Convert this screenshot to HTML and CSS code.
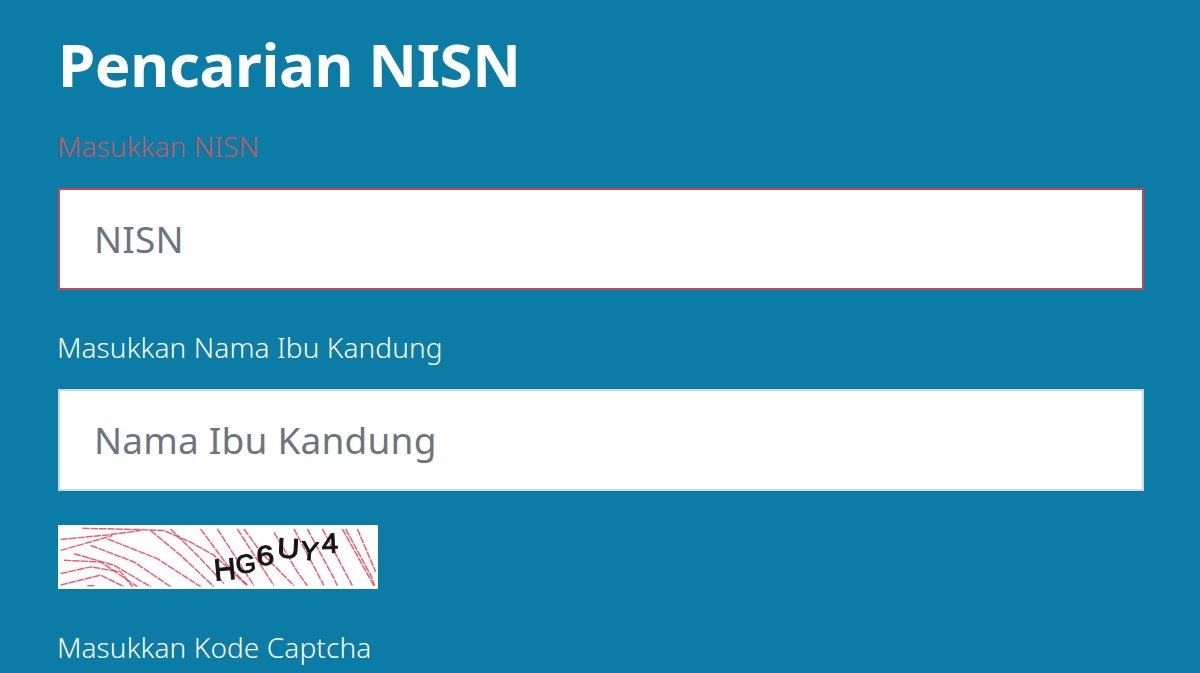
FILE: index.html
```html
<!DOCTYPE html>
<html lang="en">
<head>
    <meta charset="UTF-8">
    <meta name="viewport" content="width=device-width, initial-scale=1.0">
    <title>Pencarian NISN</title>
    <link rel="stylesheet" href="styles.css">
</head>
<body>

<div class="container">
    <h1>Pencarian NISN</h1>
    <div class="input-group has-error">
        <label for="nisn">Masukkan NISN</label>
        <input type="text" id="nisn" placeholder="NISN" />
    </div>
    <div class="input-group">
        <label for="ibu">Masukkan Nama Ibu Kandung</label>
        <input type="text" id="ibu" placeholder="Nama Ibu Kandung" />
    </div>
    <svg class="captcha" viewBox="52 28 960 194" preserveAspectRatio="none" aria-label="captcha">
        <rect x="52" y="28" width="960" height="194" fill="#fff" />
        <g class="captcha-lines">
            <path d="M125 38 L300 42 L370 45 L450 80 L520 120 L620 212" />
            <path d="M60 72 L200 58 L300 45" />
            <path d="M60 105 L130 85 L215 60" />
            <path d="M200 70 L350 130 L480 215" />
            <path d="M150 90 L280 140 L390 215" />
            <path d="M100 115 L220 150 L330 215" />
            <path d="M70 135 L180 140 L290 215" />
            <path d="M60 175 L150 155 L240 170 L275 215" />
            <path d="M60 210 L180 180 L250 215" />
            <path d="M140 212 L160 212" />
            <path d="M330 45 L420 120 L520 215" />
            <path d="M390 40 L470 120 L550 205" />
            <path d="M480 40 L560 150 L620 210" />
            <path d="M530 40 L640 212" />
            <path d="M590 40 L700 212" />
            <path d="M610 40 L660 110 L760 212" />
            <path d="M700 50 L770 170 L800 212" />
            <path d="M760 40 L850 212" />
            <path d="M800 40 L880 190 L890 212" />
            <path d="M845 40 L935 212" />
            <path d="M905 40 L1000 212" />
            <path d="M915 40 L990 180 L1002 212" />
            <path d="M950 40 L1005 170" />
        </g>
        <g class="captcha-text">
            <text transform="translate(522 197) rotate(-5)" font-size="92">H</text>
            <text transform="translate(588 176) rotate(-7)" font-size="78">G</text>
            <text transform="translate(650 152) rotate(-6) scale(1.15 1)" font-size="84">6</text>
            <text transform="translate(708 126) rotate(3) scale(1.1 1)" font-size="84">U</text>
            <text transform="translate(778 132) rotate(5)" font-size="80">Y</text>
            <text transform="translate(845 114) rotate(-3) scale(1.05 1)" font-size="84">4</text>
        </g>
    </svg>
    <div class="input-group">
        <label for="kode">Masukkan Kode Captcha</label>
    </div>
</div>

</body>
</html>
```

FILE: styles.css
```css
html, body {
    height: 100%;
    margin: 0;
    overflow: hidden;
}
body {
    font-family: "Noto Sans", Arial, sans-serif;
    background-color: #0a7ca6;
    color: #fff;
}
.container {
    padding: 22px 56px 0 58px;
}
h1 {
    margin: 0 0 20px;
    font-size: 60px;
    font-weight: 700;
    line-height: 84px;
    letter-spacing: -0.4px;
}
.input-group {
    margin-bottom: 37px;
}
.input-group:last-child {
    margin-bottom: 0;
}
.input-group label {
    display: block;
    margin: 0 0 22px -1px;
    font-size: 28px;
    font-weight: 300;
    line-height: 40px;
    letter-spacing: 0.1px;
}
.input-group:last-child label {
    margin-bottom: 0;
}
.input-group input {
    display: block;
    box-sizing: border-box;
    width: 100%;
    height: 102px;
    padding: 0 34px 2px;
    font-family: inherit;
    font-size: 37px;
    letter-spacing: 0.2px;
    color: #495057;
    background-color: #fff;
    border: 2px solid #c9d9e8;
    border-radius: 0;
}
.input-group input::placeholder {
    color: #6c757d;
    opacity: 1;
}
.has-error label {
    color: #c9565f;
}
.has-error input {
    border-color: #c2474f;
}
.captcha {
    display: block;
    width: 320px;
    height: 64px;
    margin: -3px 0 38px;
    filter: blur(0.35px);
}
.captcha-lines path {
    fill: none;
    stroke: #ee3f55;
    stroke-width: 4.5;
    stroke-dasharray: 22 3;
    opacity: 0.85;
}
.captcha-text text {
    font-family: "Liberation Sans", Arial, sans-serif;
    fill: #151515;
    stroke: #151515;
    stroke-width: 3;
}
```
